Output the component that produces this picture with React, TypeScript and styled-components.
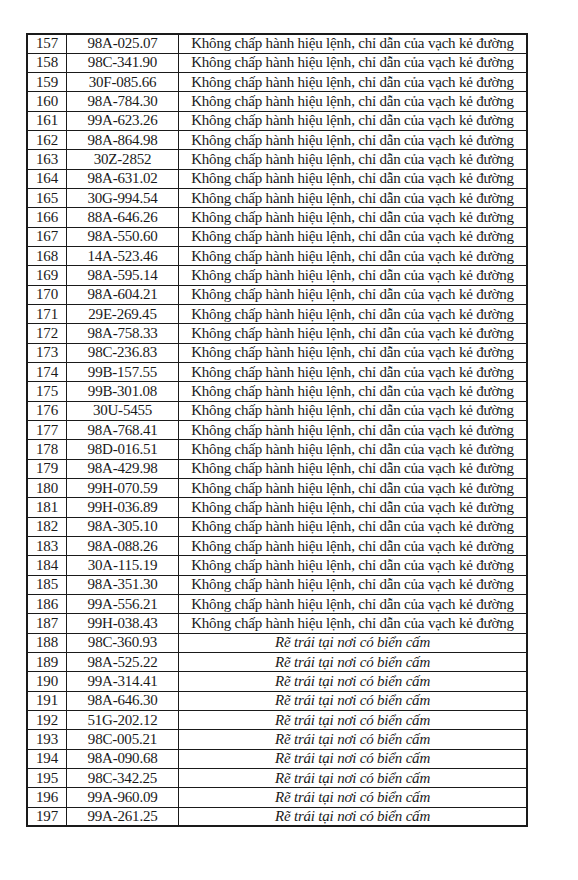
import styled, { createGlobalStyle } from 'styled-components';

const GlobalStyle = createGlobalStyle`
  html, body {
    margin: 0;
    padding: 0;
    background: #ffffff;
  }
`;

const VIOLATION = 'Không chấp hành hiệu lệnh, chỉ dẫn của vạch kẻ đường';
const LEFT_TURN = 'Rẽ trái tại nơi có biển cấm';

const plates = [
  '98A-025.07', '98C-341.90', '30F-085.66', '98A-784.30', '99A-623.26',
  '98A-864.98', '30Z-2852', '98A-631.02', '30G-994.54', '88A-646.26',
  '98A-550.60', '14A-523.46', '98A-595.14', '98A-604.21', '29E-269.45',
  '98A-758.33', '98C-236.83', '99B-157.55', '99B-301.08', '30U-5455',
  '98A-768.41', '98D-016.51', '98A-429.98', '99H-070.59', '99H-036.89',
  '98A-305.10', '98A-088.26', '30A-115.19', '98A-351.30', '99A-556.21',
  '99H-038.43', '98C-360.93', '98A-525.22', '99A-314.41', '98A-646.30',
  '51G-202.12', '98C-005.21', '98A-090.68', '98C-342.25', '99A-960.09',
  '99A-261.25',
];

const rows = plates.map((plate, i) => {
  const no = 157 + i;
  return { no, plate, italic: no >= 188, text: no >= 188 ? LEFT_TURN : VIOLATION };
});

const Page = styled.div`
  padding: 33px 0 0 26px;
`;

const Table = styled.table`
  width: 502px;
  border-collapse: collapse;
  border: 2px solid #1a1a1a;
  font-family: 'Liberation Serif', 'Times New Roman', serif;
  font-size: 15px;
  letter-spacing: -0.2px;
  color: #1a1a1a;
`;

const Row = styled.tr`
  height: 19.34px;
`;

const Cell = styled.td<{ $w?: number; $italic?: boolean }>`
  border: 1.5px solid #1a1a1a;
  text-align: center;
  padding: 0;
  line-height: 17px;
  white-space: nowrap;
  ${(p) => (p.$w ? `width: ${p.$w}px;` : '')}
  font-style: ${(p) => (p.$italic ? 'italic' : 'normal')};
`;

export default function App() {
  return (
    <>
      <GlobalStyle />
      <Page>
        <Table>
          <tbody>
            {rows.map((r) => (
              <Row key={r.no}>
                <Cell $w={38}>{r.no}</Cell>
                <Cell $w={111}>{r.plate}</Cell>
                <Cell $italic={r.italic}>{r.text}</Cell>
              </Row>
            ))}
          </tbody>
        </Table>
      </Page>
    </>
  );
}
